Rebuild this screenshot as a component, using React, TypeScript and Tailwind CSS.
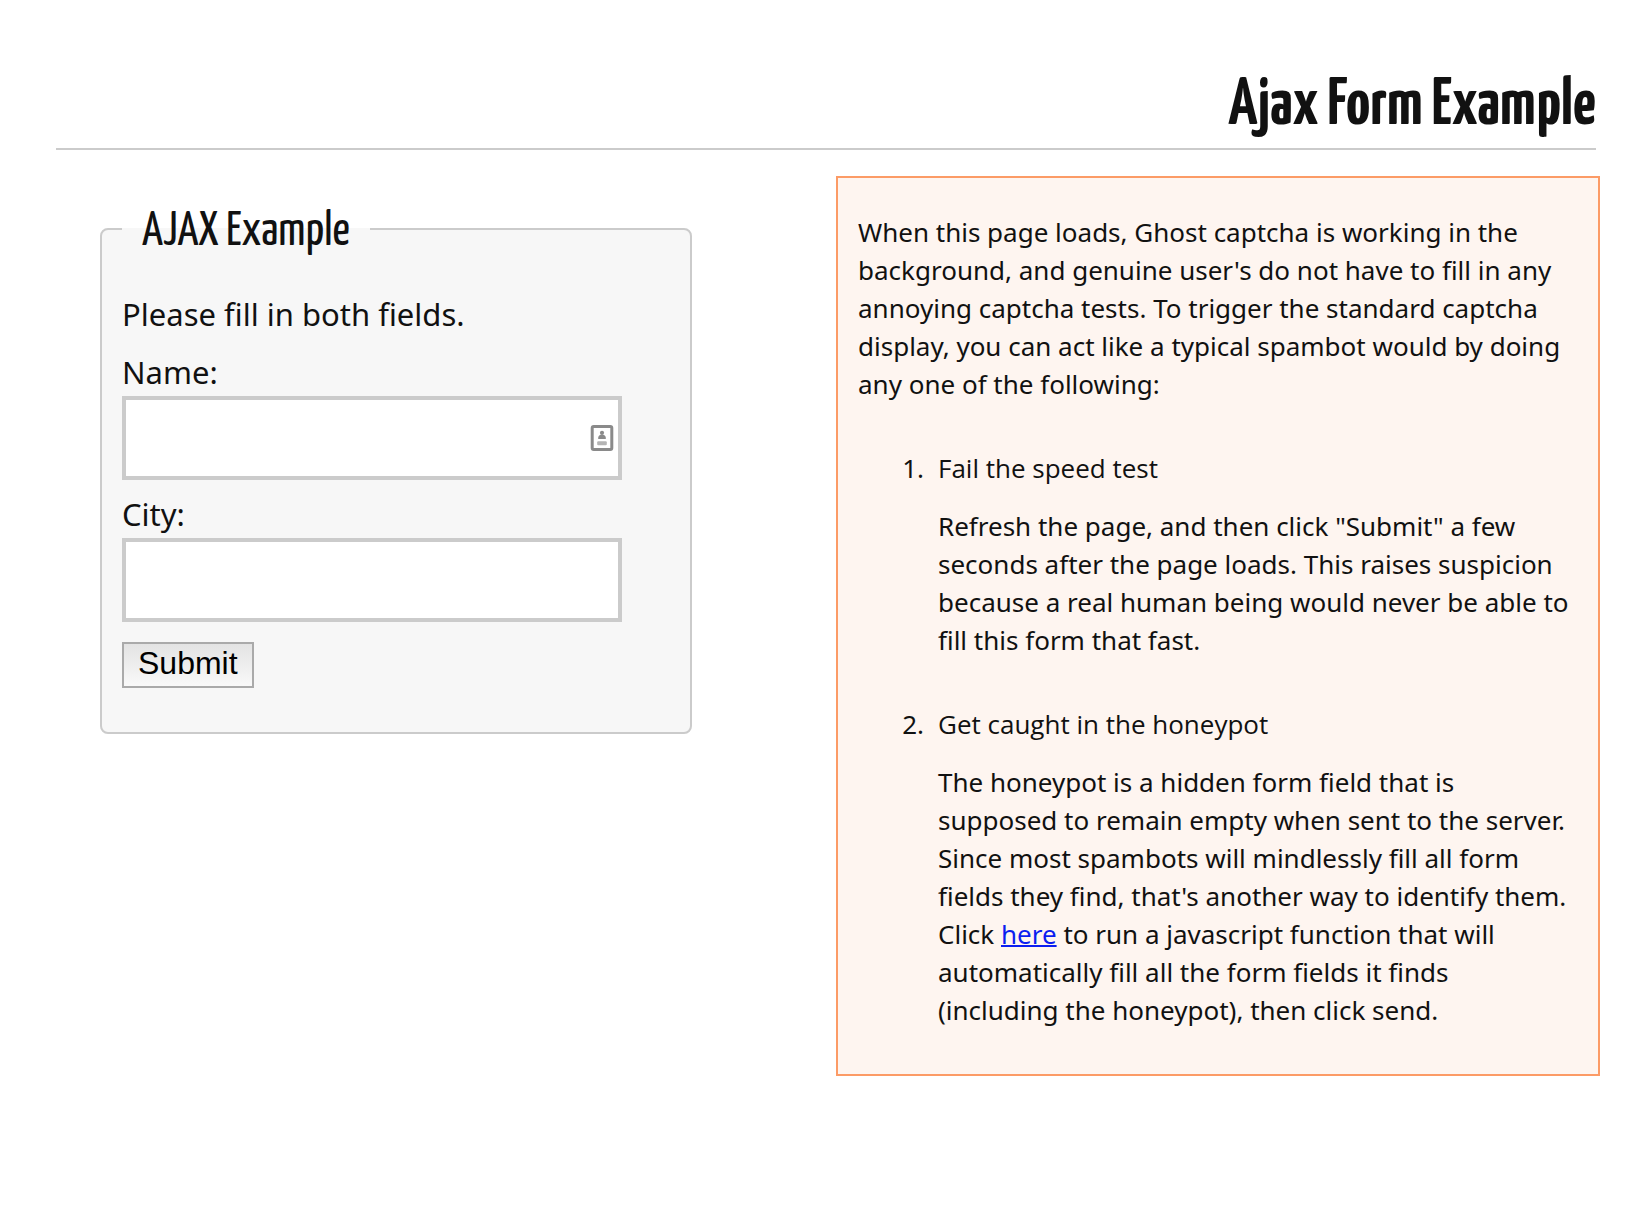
import React from "react";

function ContactCardIcon() {
  return (
    <svg viewBox="0 0 24 28" className="h-7 w-6" fill="none" aria-hidden="true">
      <rect x="2.2" y="2.6" width="19.6" height="23" rx="1.5" stroke="#8a8a8a" strokeWidth="3" />
      <circle cx="12" cy="8.8" r="2.1" fill="#8a8a8a" />
      <path d="M8.2 15v-1.2c0-1.8 1.6-3.2 3.8-3.2s3.8 1.4 3.8 3.2V15z" fill="#8a8a8a" />
      <rect x="7.2" y="17.2" width="9.6" height="4" rx="1" fill="#b4b4b4" />
    </svg>
  );
}

type FieldProps = { id: string; label: string; icon?: React.ReactNode };

function Field({ id, label, icon }: FieldProps) {
  return (
    <div className="mb-3.5 w-full max-w-[500px]">
      <label htmlFor={id} className="block pb-1 leading-10">
        {label}
      </label>
      <div className="relative">
        <input
          id={id}
          name={id}
          type="text"
          className="block h-[84px] w-full border-4 border-[#cbcbcb] bg-white px-3 outline-none"
        />
        {icon && <span className="absolute right-2 top-7">{icon}</span>}
      </div>
    </div>
  );
}

function Step({ number, title, children }: { number: number; title: string; children: React.ReactNode }) {
  return (
    <li className="mt-[46px] flex">
      <span className="w-20 shrink-0 pr-3.5 text-right">{number}.</span>
      <div className="pr-1.5">
        <h3 className="font-['Open_Sans','Noto_Sans',sans-serif]">{title}</h3>
        <p className="mt-5">{children}</p>
      </div>
    </li>
  );
}

export default function App() {
  return (
    <div className="min-h-screen bg-white pb-12 font-['Noto_Sans','Open_Sans',sans-serif] text-[#111]">
      <header className="ml-14 mr-[54px] border-b-2 border-[#cbcbcb] pt-[66px]">
        <h1 className="pb-0.5 text-right font-['Yanone_Kaffeesatz','Roboto',sans-serif] text-[67px] font-bold leading-[80px]">
          Ajax Form Example
        </h1>
      </header>
      <main className="grid grid-cols-[592fr_764fr] items-start gap-36 pl-[100px] pr-[50px] pt-[26px]">
        <form onSubmit={(e) => e.preventDefault()} className="pt-[25px] text-[31px]">
          <fieldset className="rounded-lg border-2 border-[#cbcbcb] bg-[#f7f7f7] px-5 pb-11">
            <legend className="px-5 pt-2 font-['Yanone_Kaffeesatz','Roboto',sans-serif] text-[48px] leading-[48px]">
              AJAX Example
            </legend>
            <p className="mb-[18px] mt-[37px] leading-10">Please fill in both fields.</p>
            <Field id="name" label="Name:" icon={<ContactCardIcon />} />
            <Field id="city" label="City:" />
            <button
              type="submit"
              className="mt-5 block h-[46px] border-2 border-[#aaa] bg-linear-to-b from-[#e3e3e3] to-[#f9f9f9] px-3.5 pb-1 font-['Liberation_Sans',sans-serif] text-[32px] leading-9 text-black"
            >
              Submit
            </button>
          </fieldset>
        </form>
        <section className="border-2 border-[#fc9b66] bg-[#fef5f0] px-5 pb-[45px] pt-[35px] text-[26px] leading-[38px]">
          <p>
            When this page loads, Ghost captcha is working in the background, and genuine user's do
            not have to fill in any annoying captcha tests. To trigger the standard captcha display,
            you can act like a typical spambot would by doing any one of the following:
          </p>
          <ol className="list-none">
            <Step number={1} title="Fail the speed test">
              Refresh the page, and then click "Submit" a few seconds after the page loads. This
              raises suspicion because a real human being would never be able to fill this form that
              fast.
            </Step>
            <Step number={2} title="Get caught in the honeypot">
              The honeypot is a hidden form field that is supposed to remain empty when sent to the
              server. Since most spambots will mindlessly fill all form fields they find, that's
              another way to identify them. Click{" "}
              <a href="#fill" className="text-[#0b1ef0] underline decoration-2">
                here
              </a>{" "}
              to run a javascript function that will automatically fill all the form fields it finds
              (including the honeypot), then click send.
            </Step>
          </ol>
        </section>
      </main>
    </div>
  );
}
